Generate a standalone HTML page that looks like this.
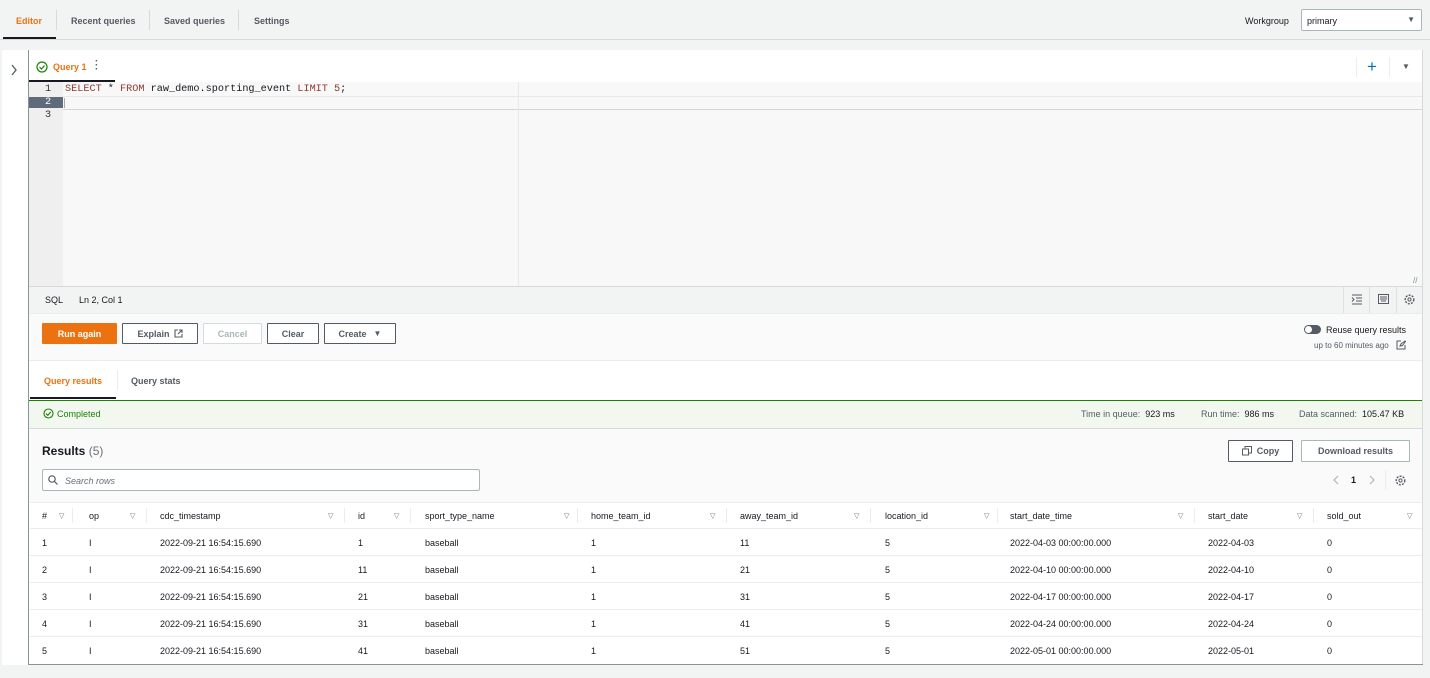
<!DOCTYPE html>
<html><head><meta charset="utf-8"><style>
*{box-sizing:border-box;margin:0;padding:0}
body{width:1430px;height:678px;background:#f2f3f3;font-family:"Liberation Sans",sans-serif;font-size:9px;color:#16191f;position:relative;overflow:hidden}
.a{position:absolute}
.b{font-weight:bold}
.btn{position:absolute;height:21px;border:1px solid #545b64;background:#fff;font-weight:bold;font-size:9px;color:#545b64;display:flex;align-items:center;justify-content:center;border-radius:1px}
.mono{font-family:"Liberation Mono",monospace;font-size:10.2px}
.tri{position:absolute;font-size:7px;color:#687078}
.row{position:absolute;left:30px;width:1392px;height:1px;background:#eaeded}
</style></head><body>
<div class="a b" style="left:16px;top:16px;color:#ec7211">Editor</div>
<div class="a" style="left:3px;top:37px;width:53px;height:2px;background:#16191f"></div>
<div class="a" style="left:0;top:39px;width:1430px;height:1px;background:#d5dbdb"></div>
<div class="a" style="left:56px;top:10px;width:1px;height:20px;background:#d5dbdb"></div>
<div class="a b" style="left:71px;top:16px;color:#545b64">Recent queries</div>
<div class="a" style="left:149px;top:10px;width:1px;height:20px;background:#d5dbdb"></div>
<div class="a b" style="left:164px;top:16px;color:#545b64">Saved queries</div>
<div class="a" style="left:238px;top:10px;width:1px;height:20px;background:#d5dbdb"></div>
<div class="a b" style="left:254px;top:16px;color:#545b64">Settings</div>
<div class="a" style="left:1245px;top:16px">Workgroup</div>
<div class="a" style="left:1301px;top:9px;width:121px;height:22px;border:1px solid #aab7b8;background:#fff;border-radius:2px;padding:6px 5px">primary<span style="position:absolute;right:6px;top:5px;font-size:8px;color:#545b64">▼</span></div>

<div class="a" style="left:2px;top:50px;width:26px;height:615px;background:#fff"></div>
<svg class="a" style="left:10px;top:64px" width="8" height="12"><path d="M2 1l4 5-4 5" fill="none" stroke="#545b64" stroke-width="1.3"/></svg>

<div class="a" style="left:28px;top:50px;width:1395px;height:615px;background:#fff;border-left:1px solid #879596;border-bottom:1px solid #879596"></div>
<svg class="a" style="left:36px;top:61px" width="12" height="12"><circle cx="6" cy="6" r="5" fill="none" stroke="#1d8102" stroke-width="1.2"/><path d="M3.5 6l2 2 3-3.5" fill="none" stroke="#1d8102" stroke-width="1.2"/></svg>
<div class="a b" style="left:53px;top:62px;color:#ec7211">Query 1</div>
<div class="a b" style="left:95px;top:60px;color:#545b64;font-size:10px;line-height:4px;width:4px">·<br>·<br>·</div>
<div class="a" style="left:29px;top:80px;width:86px;height:2px;background:#16191f"></div>
<div class="a" style="left:1356px;top:57px;width:1px;height:20px;background:#eaeded"></div>
<div class="a" style="left:1389px;top:57px;width:1px;height:20px;background:#eaeded"></div>
<div class="a" style="left:1367px;top:57px;color:#0073bb;font-size:17px;line-height:20px">+</div>
<div class="a" style="left:1402px;top:62px;color:#545b64;font-size:8px">▼</div>

<div class="a" style="left:29px;top:82px;width:1394px;height:204px;background:#f8f8f8"></div>
<div class="a" style="left:29px;top:82px;width:34px;height:204px;background:#efefef"></div>
<div class="a" style="left:29px;top:97px;width:34px;height:11px;background:#5f6b7a"></div>
<div class="a" style="left:63px;top:96px;width:1360px;height:1px;background:#e8e8e8"></div>
<div class="a" style="left:63px;top:109px;width:1360px;height:1px;background:#d5d5d5"></div>
<div class="a" style="left:518px;top:82px;width:1px;height:204px;background:#e8e8e8"></div>
<div class="a" style="left:64px;top:98px;width:1px;height:10px;background:#aaa"></div>
<div class="a mono" style="left:45px;top:84px;color:#333">1</div>
<div class="a mono" style="left:45px;top:97px;color:#fff">2</div>
<div class="a mono" style="left:45px;top:110px;color:#333">3</div>
<div class="a mono" style="left:65px;top:84px"><span style="color:#8b3a2e">SELECT</span> * <span style="color:#8b3a2e">FROM</span> raw_demo.sporting_event <span style="color:#8b3a2e">LIMIT</span> <span style="color:#8b3a2e">5</span>;</div>
<div class="a" style="left:1413px;top:276px;color:#888;font-size:8px">//</div>

<div class="a" style="left:29px;top:286px;width:1394px;height:28px;background:#f2f3f3;border-top:1px solid #d5dbdb;border-bottom:1px solid #eaeded"></div>
<div class="a" style="left:45px;top:295px">SQL</div>
<div class="a" style="left:79px;top:295px">Ln 2, Col 1</div>
<div class="a" style="left:1343px;top:287px;width:1px;height:26px;background:#e0e0e0"></div>
<div class="a" style="left:1369px;top:287px;width:1px;height:26px;background:#e0e0e0"></div>
<div class="a" style="left:1396px;top:287px;width:1px;height:26px;background:#e0e0e0"></div>
<svg class="a" style="left:1351px;top:294px" width="12" height="11"><path d="M1 1h10M5 4h6M5 7h6M1 10h10M1 3.5l2 2-2 2" fill="none" stroke="#545b64" stroke-width="1"/></svg>
<svg class="a" style="left:1378px;top:294px" width="11" height="10"><rect x="0.5" y="0.5" width="10" height="9" fill="none" stroke="#545b64"/><path d="M2 3h7M2 5h7M3 7h5" stroke="#545b64"/></svg>
<svg class="a" style="left:1404px;top:294px" width="11" height="11"><circle cx="5.5" cy="5.5" r="4.3" fill="none" stroke="#545b64" stroke-width="1.4" stroke-dasharray="2 1.2"/><circle cx="5.5" cy="5.5" r="1.6" fill="none" stroke="#545b64"/></svg>

<div class="a" style="left:29px;top:314px;width:1394px;height:47px;background:#fafafa;border-bottom:1px solid #eaeded"></div>
<div class="btn" style="left:42px;top:323px;width:75px;background:#ec7211;border-color:#ec7211;color:#fff">Run again</div>
<div class="btn" style="left:122px;top:323px;width:76px">Explain <svg style="margin-left:4px" width="9" height="9"><path d="M4 1H1v7h7V5M5 1h3v3M8 1L4 5" fill="none" stroke="#545b64" stroke-width="1.1"/></svg></div>
<div class="btn" style="left:203px;top:323px;width:59px;border-color:#d5dbdb;color:#aab7b8">Cancel</div>
<div class="btn" style="left:267px;top:323px;width:52px">Clear</div>
<div class="btn" style="left:324px;top:323px;width:72px">Create <span style="margin-left:7px;font-size:8px">▼</span></div>
<div class="a" style="left:1304px;top:325px;width:17px;height:9px;border-radius:5px;background:#545b64"></div>
<div class="a" style="left:1305px;top:326px;width:7px;height:7px;border-radius:4px;background:#fff"></div>
<div class="a" style="left:1326px;top:325px">Reuse query results</div>
<div class="a" style="left:1314px;top:341px;font-size:8px;color:#545b64">up to 60 minutes ago</div>
<svg class="a" style="left:1396px;top:340px" width="10" height="10"><path d="M5 1H1v8h8V5M4 6l1-2 4-3 0.5 .5-3 4z" fill="none" stroke="#545b64"/></svg>

<div class="a b" style="left:44px;top:376px;color:#ec7211">Query results</div>
<div class="a" style="left:30px;top:397px;width:86px;height:2px;background:#16191f"></div>
<div class="a" style="left:117px;top:370px;width:1px;height:20px;background:#eaeded"></div>
<div class="a b" style="left:131px;top:376px;color:#545b64">Query stats</div>
<div class="a" style="left:29px;top:400px;width:1394px;height:29px;background:#f2f8f0;border-top:1px solid #1d8102;border-bottom:1px solid #d5dbdb"></div>
<svg class="a" style="left:43px;top:408px" width="11" height="11"><circle cx="5.5" cy="5.5" r="4.5" fill="none" stroke="#1d8102" stroke-width="1.1"/><path d="M3 5.5l1.8 1.8 3-3.3" fill="none" stroke="#1d8102" stroke-width="1.1"/></svg>
<div class="a" style="left:57px;top:409px;color:#1d8102">Completed</div>
<div class="a" style="left:1081px;top:409px;color:#545b64">Time in queue:&nbsp; <span style="color:#16191f">923 ms</span></div>
<div class="a" style="left:1201px;top:409px;color:#545b64">Run time:&nbsp; <span style="color:#16191f">986 ms</span></div>
<div class="a" style="left:1299px;top:409px;color:#545b64">Data scanned:&nbsp; <span style="color:#16191f">105.47 KB</span></div>

<div class="a" style="left:29px;top:429px;width:1394px;height:235px;background:#fafafa"></div>
<div class="a" style="left:42px;top:444px;font-size:12px"><b>Results</b> <span style="color:#687078">(5)</span></div>
<div class="btn" style="left:1228px;top:440px;width:65px;height:22px"><svg style="margin-right:5px" width="10" height="10"><rect x="0.5" y="3" width="6" height="6" fill="none" stroke="#545b64"/><path d="M3 3V0.5h6.5V7H7" fill="none" stroke="#545b64"/></svg>Copy</div>
<div class="btn" style="left:1301px;top:440px;width:109px;height:22px;border-color:#aab7b8">Download results</div>
<div class="a" style="left:42px;top:469px;width:438px;height:22px;border:1px solid #aab7b8;border-radius:2px;background:#fff"></div>
<svg class="a" style="left:48px;top:475px" width="10" height="10"><circle cx="4" cy="4" r="3.2" fill="none" stroke="#545b64" stroke-width="1.2"/><path d="M6.5 6.5L9.5 9.5" stroke="#545b64" stroke-width="1.2"/></svg>
<div class="a" style="left:65px;top:476px;font-style:italic;color:#687078">Search rows</div>
<svg class="a" style="left:1332px;top:475px" width="7" height="10"><path d="M6 1L2 5l4 4" fill="none" stroke="#aab7b8" stroke-width="1.2"/></svg>
<div class="a b" style="left:1351px;top:475px">1</div>
<svg class="a" style="left:1369px;top:475px" width="7" height="10"><path d="M1 1l4 4-4 4" fill="none" stroke="#aab7b8" stroke-width="1.2"/></svg>
<div class="a" style="left:1385px;top:470px;width:1px;height:20px;background:#eaeded"></div>
<svg class="a" style="left:1395px;top:475px" width="11" height="11"><circle cx="5.5" cy="5.5" r="4.3" fill="none" stroke="#545b64" stroke-width="1.4" stroke-dasharray="2 1.2"/><circle cx="5.5" cy="5.5" r="1.6" fill="none" stroke="#545b64"/></svg>

<div class="a" style="left:29px;top:502px;width:1394px;height:162px;background:#fff"></div>
<div class="row" style="top:502px"></div>
<div class="row" style="top:528px;background:#eaeded"></div>
<div class="row" style="top:555px"></div>
<div class="row" style="top:582px"></div>
<div class="row" style="top:609px"></div>
<div class="row" style="top:636px"></div>
<div class="a" style="left:42px;top:511px">#</div><div class="tri" style="left:59px;top:512px">▽</div>
<div class="a" style="left:89px;top:511px">op</div><div class="tri" style="left:130px;top:512px">▽</div>
<div class="a" style="left:160px;top:511px">cdc_timestamp</div><div class="tri" style="left:328px;top:512px">▽</div>
<div class="a" style="left:358px;top:511px">id</div><div class="tri" style="left:394px;top:512px">▽</div>
<div class="a" style="left:425px;top:511px">sport_type_name</div><div class="tri" style="left:564px;top:512px">▽</div>
<div class="a" style="left:591px;top:511px">home_team_id</div><div class="tri" style="left:710px;top:512px">▽</div>
<div class="a" style="left:740px;top:511px">away_team_id</div><div class="tri" style="left:854px;top:512px">▽</div>
<div class="a" style="left:885px;top:511px">location_id</div><div class="tri" style="left:984px;top:512px">▽</div>
<div class="a" style="left:1010px;top:511px">start_date_time</div><div class="tri" style="left:1178px;top:512px">▽</div>
<div class="a" style="left:1208px;top:511px">start_date</div><div class="tri" style="left:1297px;top:512px">▽</div>
<div class="a" style="left:1327px;top:511px">sold_out</div><div class="tri" style="left:1407px;top:512px">▽</div>
<div class="a" style="left:72px;top:508px;width:1px;height:15px;background:#eaeded"></div>
<div class="a" style="left:146px;top:508px;width:1px;height:15px;background:#eaeded"></div>
<div class="a" style="left:344px;top:508px;width:1px;height:15px;background:#eaeded"></div>
<div class="a" style="left:410px;top:508px;width:1px;height:15px;background:#eaeded"></div>
<div class="a" style="left:577px;top:508px;width:1px;height:15px;background:#eaeded"></div>
<div class="a" style="left:726px;top:508px;width:1px;height:15px;background:#eaeded"></div>
<div class="a" style="left:870px;top:508px;width:1px;height:15px;background:#eaeded"></div>
<div class="a" style="left:997px;top:508px;width:1px;height:15px;background:#eaeded"></div>
<div class="a" style="left:1194px;top:508px;width:1px;height:15px;background:#eaeded"></div>
<div class="a" style="left:1313px;top:508px;width:1px;height:15px;background:#eaeded"></div>

<div class="a" style="left:42px;top:538px">1</div><div class="a" style="left:89px;top:538px">I</div><div class="a" style="left:160px;top:538px">2022-09-21 16:54:15.690</div><div class="a" style="left:358px;top:538px">1</div><div class="a" style="left:425px;top:538px">baseball</div><div class="a" style="left:591px;top:538px">1</div><div class="a" style="left:740px;top:538px">11</div><div class="a" style="left:885px;top:538px">5</div><div class="a" style="left:1010px;top:538px">2022-04-03 00:00:00.000</div><div class="a" style="left:1208px;top:538px">2022-04-03</div><div class="a" style="left:1327px;top:538px">0</div>
<div class="a" style="left:42px;top:565px">2</div><div class="a" style="left:89px;top:565px">I</div><div class="a" style="left:160px;top:565px">2022-09-21 16:54:15.690</div><div class="a" style="left:358px;top:565px">11</div><div class="a" style="left:425px;top:565px">baseball</div><div class="a" style="left:591px;top:565px">1</div><div class="a" style="left:740px;top:565px">21</div><div class="a" style="left:885px;top:565px">5</div><div class="a" style="left:1010px;top:565px">2022-04-10 00:00:00.000</div><div class="a" style="left:1208px;top:565px">2022-04-10</div><div class="a" style="left:1327px;top:565px">0</div>
<div class="a" style="left:42px;top:592px">3</div><div class="a" style="left:89px;top:592px">I</div><div class="a" style="left:160px;top:592px">2022-09-21 16:54:15.690</div><div class="a" style="left:358px;top:592px">21</div><div class="a" style="left:425px;top:592px">baseball</div><div class="a" style="left:591px;top:592px">1</div><div class="a" style="left:740px;top:592px">31</div><div class="a" style="left:885px;top:592px">5</div><div class="a" style="left:1010px;top:592px">2022-04-17 00:00:00.000</div><div class="a" style="left:1208px;top:592px">2022-04-17</div><div class="a" style="left:1327px;top:592px">0</div>
<div class="a" style="left:42px;top:619px">4</div><div class="a" style="left:89px;top:619px">I</div><div class="a" style="left:160px;top:619px">2022-09-21 16:54:15.690</div><div class="a" style="left:358px;top:619px">31</div><div class="a" style="left:425px;top:619px">baseball</div><div class="a" style="left:591px;top:619px">1</div><div class="a" style="left:740px;top:619px">41</div><div class="a" style="left:885px;top:619px">5</div><div class="a" style="left:1010px;top:619px">2022-04-24 00:00:00.000</div><div class="a" style="left:1208px;top:619px">2022-04-24</div><div class="a" style="left:1327px;top:619px">0</div>
<div class="a" style="left:42px;top:646px">5</div><div class="a" style="left:89px;top:646px">I</div><div class="a" style="left:160px;top:646px">2022-09-21 16:54:15.690</div><div class="a" style="left:358px;top:646px">41</div><div class="a" style="left:425px;top:646px">baseball</div><div class="a" style="left:591px;top:646px">1</div><div class="a" style="left:740px;top:646px">51</div><div class="a" style="left:885px;top:646px">5</div><div class="a" style="left:1010px;top:646px">2022-05-01 00:00:00.000</div><div class="a" style="left:1208px;top:646px">2022-05-01</div><div class="a" style="left:1327px;top:646px">0</div>
<div class="a" style="left:1422px;top:50px;width:1px;height:615px;background:#d5dbdb"></div>
<div class="a" style="left:28px;top:664px;width:1395px;height:1px;background:#879596"></div>
</body></html>
